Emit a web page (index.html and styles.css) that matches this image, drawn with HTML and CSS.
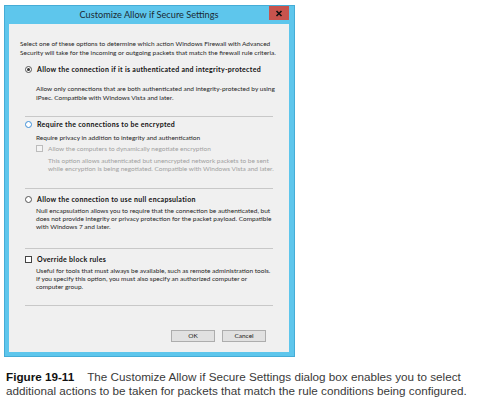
FILE: index.html
```html
<!DOCTYPE html>
<html>
<head>
<meta charset="utf-8">
<link rel="stylesheet" href="styles.css">
</head>
<body>
<div class="page">
  <div class="window">
    <div class="titlebar">
      <span class="spacer"></span>
      <span class="title">Customize Allow if Secure Settings</span>
      <span class="close"><svg width="8" height="7" viewBox="0 0 8 7"><path d="M1.5 1 L6.5 6 M6.5 1 L1.5 6" stroke="#111" stroke-width="1.6" fill="none"/></svg></span>
    </div>
    <div class="content">
      <p class="intro">Select one of these options to determine which action Windows Firewall with Advanced<br>Security will take for the incoming or outgoing packets that match the firewall rule criteria.</p>
      <div class="options">
        <div class="option opt1">
          <div class="head"><span class="radio checked"></span><span class="label">Allow the connection if it is authenticated and integrity-protected</span></div>
          <p class="desc d1">Allow only connections that are both authenticated and integrity-protected by using<br>IPsec. Compatible with Windows Vista and later.</p>
        </div>
        <hr class="sep s1">
        <div class="option opt2">
          <div class="head"><span class="radio focus"></span><span class="label">Require the connections to be encrypted</span></div>
          <p class="desc d2">Require privacy in addition to integrity and authentication</p>
          <div class="sub">
            <div class="subhead"><span class="check disabled"></span><span class="sublabel">Allow the computers to dynamically negotiate encryption</span></div>
            <p class="subdesc">This option allows authenticated but unencrypted network packets to be sent<br>while encryption is being negotiated. Compatible with Windows Vista and later.</p>
          </div>
        </div>
        <hr class="sep s2">
        <div class="option opt3">
          <div class="head"><span class="radio"></span><span class="label">Allow the connection to use null encapsulation</span></div>
          <p class="desc d3">Null encapsulation allows you to require that the connection be authenticated, but<br>does not provide integrity or privacy protection for the packet payload. Compatible<br>with Windows 7 and later.</p>
        </div>
        <hr class="sep s3">
        <div class="option opt4">
          <div class="head"><span class="check"></span><span class="label">Override block rules</span></div>
          <p class="desc d4">Useful for tools that must always be available, such as remote administration tools.<br>If you specify this option, you must also specify an authorized computer or<br>computer group.</p>
        </div>
        <hr class="sep s4">
      </div>
      <div class="buttons">
        <button class="btn">OK</button>
        <button class="btn">Cancel</button>
      </div>
    </div>
  </div>
  <p class="caption"><b class="fig">Figure 19-11</b>&nbsp;&nbsp;&nbsp;&nbsp;The Customize Allow if Secure Settings dialog box enables you to select<br>additional actions to be taken for packets that match the rule conditions being configured.</p>
</div>
</body>
</html>
```
FILE: styles.css
```css
html, body {
  margin: 0;
  padding: 0;
  background: #ffffff;
}
.page {
  padding: 5px 0 0 4px;
}
.window {
  border: 1px solid #45acd6;
  background: #5ec6ec;
  padding: 0 5px 4px 4px;
  box-sizing: content-box;
  width: 280px;
}
.titlebar {
  height: 18px;
  display: grid;
  grid-template-columns: 1fr auto 1fr;
  align-items: start;
}
.title {
  font-family: Lato, "Liberation Sans", sans-serif;
  font-size: 9.2px;
  color: #1b2a33;
  line-height: 18px;
  white-space: nowrap;
}
.close {
  justify-self: end;
  width: 20px;
  height: 14px;
  background: #c8534d;
  display: flex;
  align-items: center;
  justify-content: center;
}
.content {
  background: #f0f0f0;
  padding: 14.5px 15px 10px 11px;
  font-family: Lato, "Liberation Sans", sans-serif;
  font-size: 6.5px;
  color: #262626;
  white-space: nowrap;
}
p { margin: 0; }
.intro {
  line-height: 9px;
}
.options {
  margin-left: 5px;
}
.head {
  display: flex;
  align-items: center;
  height: 9px;
}
.label {
  font-weight: bold;
  font-size: 7px;
  letter-spacing: 0.3px;
  margin-left: 5px;
  line-height: 9px;
  color: #111;
}
.opt1 { margin-top: 8px; }
.radio {
  width: 7px;
  height: 7px;
  border-radius: 50%;
  border: 1px solid #555;
  box-sizing: border-box;
  background: #fff;
  display: inline-flex;
  align-items: center;
  justify-content: center;
  flex: none;
}
.radio.checked::after {
  content: "";
  width: 3px;
  height: 3px;
  border-radius: 50%;
  background: #333;
}
.radio.focus {
  border-color: #3c8fd8;
}
.check {
  width: 7px;
  height: 7px;
  border: 1px solid #444;
  box-sizing: border-box;
  background: #fff;
  flex: none;
}
.check.disabled {
  border-color: #bcbcbc;
  background: #f4f4f4;
}
.desc {
  margin-left: 11px;
  line-height: 8px;
}
.d1 { margin-top: 10.5px; line-height: 9px; }
.d2 { margin-top: 4px; line-height: 9px; }
.d3 { margin-top: 3.5px; }
.d4 { margin-top: 3.5px; }
.sep {
  border: 0;
  border-top: 1px solid #c8c8c8;
  margin: 0;
  width: 248px;
}
.s1 { margin-top: 13.5px; }
.s2 { margin-top: 15px; }
.s3 { margin-top: 17px; }
.s4 { margin-top: 14px; }
.opt2 { margin-top: 3.5px; }
.opt3 { margin-top: 6px; }
.opt4 { margin-top: 5.5px; }
.sub {
  margin-left: 11px;
  margin-top: 2px;
}
.subhead {
  display: flex;
  align-items: center;
  height: 9px;
}
.sublabel {
  margin-left: 5px;
  color: #a0a0a0;
}
.subdesc {
  color: #a0a0a0;
  margin-left: 12px;
  margin-top: 3.5px;
  line-height: 8px;
}
.buttons {
  display: flex;
  justify-content: flex-end;
  gap: 7px;
  margin-top: 24px;
  padding-right: 8px;
}
.btn {
  width: 44px;
  height: 12px;
  padding: 0;
  border: 1px solid #adadad;
  background: #e1e1e1;
  font-family: Lato, "Liberation Sans", sans-serif;
  font-size: 6.5px;
  color: #222;
  line-height: 10px;
}
.caption {
  margin: 13px 0 0 2px;
  font-family: "Liberation Sans", Arial, sans-serif;
  font-size: 11.7px;
  line-height: 14px;
  color: #3a3a3a;
  white-space: nowrap;
}
.fig {
  color: #111;
}
```
